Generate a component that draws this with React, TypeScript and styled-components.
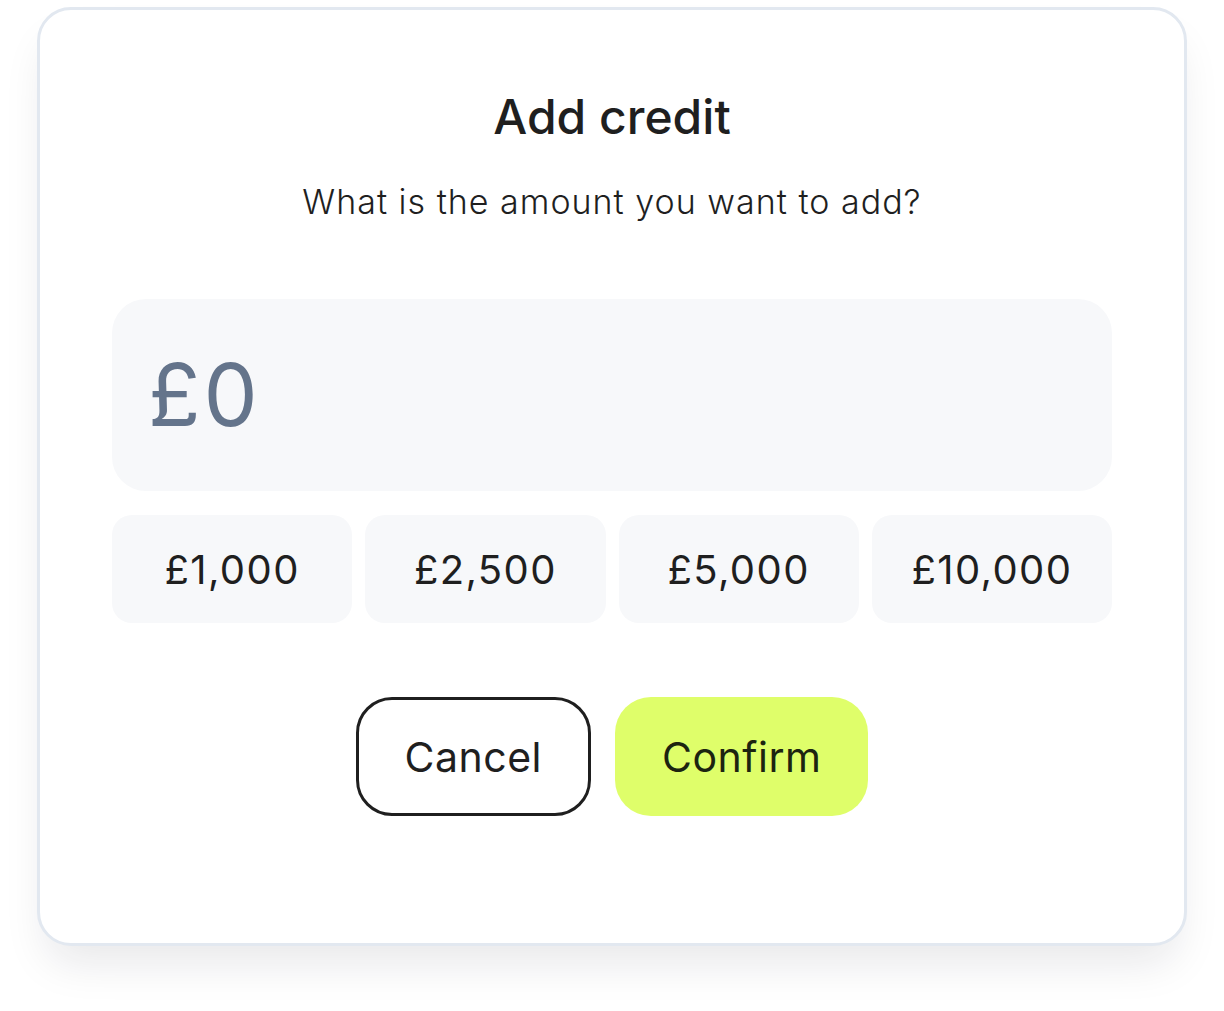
import React, { useState } from 'react';
import styled, { createGlobalStyle } from 'styled-components';

const GlobalStyle = createGlobalStyle`
  html, body {
    margin: 0;
    padding: 0;
    background: #ffffff;
  }
  body {
    font-family: Inter, "Noto Sans", "Liberation Sans", sans-serif;
    color: #1f1f1f;
    -webkit-font-smoothing: antialiased;
  }
  * {
    box-sizing: border-box;
  }
`;

const Page = styled.main`
  min-height: 100vh;
  display: flex;
  justify-content: center;
  align-items: flex-start;
  padding: 7px 0 60px;
`;

const Dialog = styled.section`
  width: 1150px;
  background: #ffffff;
  border: 3px solid #e2e8f0;
  border-radius: 34px;
  box-shadow: 0 26px 44px -10px rgba(15, 23, 42, 0.1);
  padding: 78px 72px 127px;
  display: flex;
  flex-direction: column;
  align-items: center;
`;

const Title = styled.h2`
  margin: 0;
  font-size: 48px;
  line-height: 58px;
  font-weight: 500;
  color: #1f1f1f;
`;

const Subtitle = styled.p`
  margin: 36px 0 0;
  font-size: 34px;
  line-height: 40px;
  font-weight: 300;
  letter-spacing: 1px;
  color: #1f1f1f;
`;

const AmountField = styled.div`
  margin-top: 77px;
  width: 100%;
  height: 192px;
  border-radius: 34px;
  background: #f7f8fa;
  display: flex;
  align-items: center;
  padding: 0 36px;
`;

const AmountInput = styled.input`
  border: none;
  outline: none;
  background: transparent;
  width: 100%;
  font-family: inherit;
  font-size: 86px;
  font-weight: 400;
  letter-spacing: 3px;
  color: #64748b;
  padding: 0;

  &::placeholder {
    color: #64748b;
  }
`;

const Presets = styled.div`
  margin-top: 24px;
  width: 100%;
  display: grid;
  grid-template-columns: repeat(4, 1fr);
  gap: 13px;
`;

const PresetButton = styled.button<{ $active?: boolean }>`
  height: 108px;
  border: none;
  border-radius: 20px;
  background: ${({ $active }) => ($active ? '#eef1f5' : '#f7f8fa')};
  font-family: inherit;
  font-size: 40px;
  font-weight: 400;
  letter-spacing: 1.4px;
  color: #1f1f1f;
  cursor: pointer;
`;

const Actions = styled.div`
  margin-top: 74px;
  display: flex;
  gap: 24px;
`;

const ActionButton = styled.button<{ $primary?: boolean }>`
  height: 119px;
  padding: 0 ${({ $primary }) => ($primary ? '47px' : '46px')};
  border-radius: 36px;
  border: ${({ $primary }) => ($primary ? 'none' : '3px solid #1f1f1f')};
  background: ${({ $primary }) => ($primary ? '#dffe6a' : '#ffffff')};
  color: ${({ $primary }) => ($primary ? '#1c2410' : '#1f1f1f')};
  font-family: inherit;
  font-size: 41px;
  font-weight: 400;
  letter-spacing: 0.5px;
  cursor: pointer;
`;

const presets = [1000, 2500, 5000, 10000];

export default function App() {
  const [amount, setAmount] = useState('');

  return (
    <>
      <GlobalStyle />
      <Page>
        <Dialog>
          <Title>Add credit</Title>
          <Subtitle>What is the amount you want to add?</Subtitle>
          <AmountField>
            <AmountInput
              value={amount}
              placeholder="£0"
              onChange={(e) => setAmount(e.target.value)}
            />
          </AmountField>
          <Presets>
            {presets.map((p) => (
              <PresetButton key={p} onClick={() => setAmount('£' + p.toLocaleString('en-GB'))}>
                £{p.toLocaleString('en-GB')}
              </PresetButton>
            ))}
          </Presets>
          <Actions>
            <ActionButton>Cancel</ActionButton>
            <ActionButton $primary>Confirm</ActionButton>
          </Actions>
        </Dialog>
      </Page>
    </>
  );
}
